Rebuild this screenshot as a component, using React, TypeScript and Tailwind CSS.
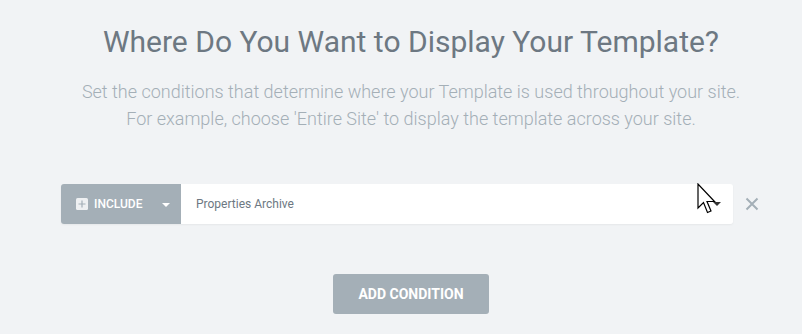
export default function App() {
  return (
    <div className="relative w-[802px] h-[334px] bg-[#f1f3f5] flex flex-col items-center pl-[20px]" style={{ fontFamily: "Roboto, 'Liberation Sans', sans-serif" }}>
      <h1 className="mt-[23px] text-[30px] leading-[38px] text-[#6d7882] font-normal">Where Do You Want to Display Your Template?</h1>
      <p className="mt-[17px] text-[18px] leading-[27px] text-[#a4afb7] font-light text-center">
        Set the conditions that determine where your Template is used throughout your site.
        <br />
        For example, choose 'Entire Site' to display the template across your site.
      </p>
      <div className="mt-[52px] w-full flex items-center pl-[41px]">
        <div className="relative flex w-[672px] h-[40px] rounded-[3px] overflow-hidden shadow-[0_1px_2px_rgba(0,0,0,0.05)]">
          <div className="w-[120px] bg-[#a4afb7] flex items-center pl-[15px] text-white">
            <svg width="12" height="12" viewBox="0 0 12 12">
              <rect x="0" y="0" width="12" height="12" rx="1.5" fill="#eef0f2" />
              <path d="M6 2.5 V9.5 M2.5 6 H9.5" stroke="#a4afb7" strokeWidth="1.2" />
            </svg>
            <span className="ml-[6px] text-[12px] font-medium uppercase">Include</span>
            <span className="ml-[20px] mt-[1px] w-0 h-0 border-l-[4px] border-r-[4px] border-t-[4px] border-l-transparent border-r-transparent border-t-white" />
          </div>
          <div className="flex-1 bg-white flex items-center pl-[15px] text-[12px] text-[#6d7882]">Properties Archive</div>
          <span className="absolute right-[12px] top-[18px] w-0 h-0 border-l-[4px] border-r-[4px] border-t-[4px] border-l-transparent border-r-transparent border-t-[#333]" />
        </div>
        <svg className="ml-[12px]" width="14" height="14" viewBox="0 0 14 14">
          <path d="M1.5 1.5 L12.5 12.5 M12.5 1.5 L1.5 12.5" stroke="#a4afb7" strokeWidth="2" />
        </svg>
      </div>
      <button className="mt-[50px] w-[156px] h-[40px] bg-[#a4afb7] rounded-[3px] text-white text-[14px] font-bold uppercase">Add Condition</button>
      <svg className="absolute left-[697px] top-[183px]" width="20" height="32" viewBox="0 0 20 32">
        <path d="M1 1 L1 25 L6.5 19.5 L10.5 29.5 L14 28 L10 18.5 L17.5 18.5 Z" fill="white" stroke="black" strokeWidth="1.2" strokeLinejoin="miter" />
      </svg>
    </div>
  );
}
